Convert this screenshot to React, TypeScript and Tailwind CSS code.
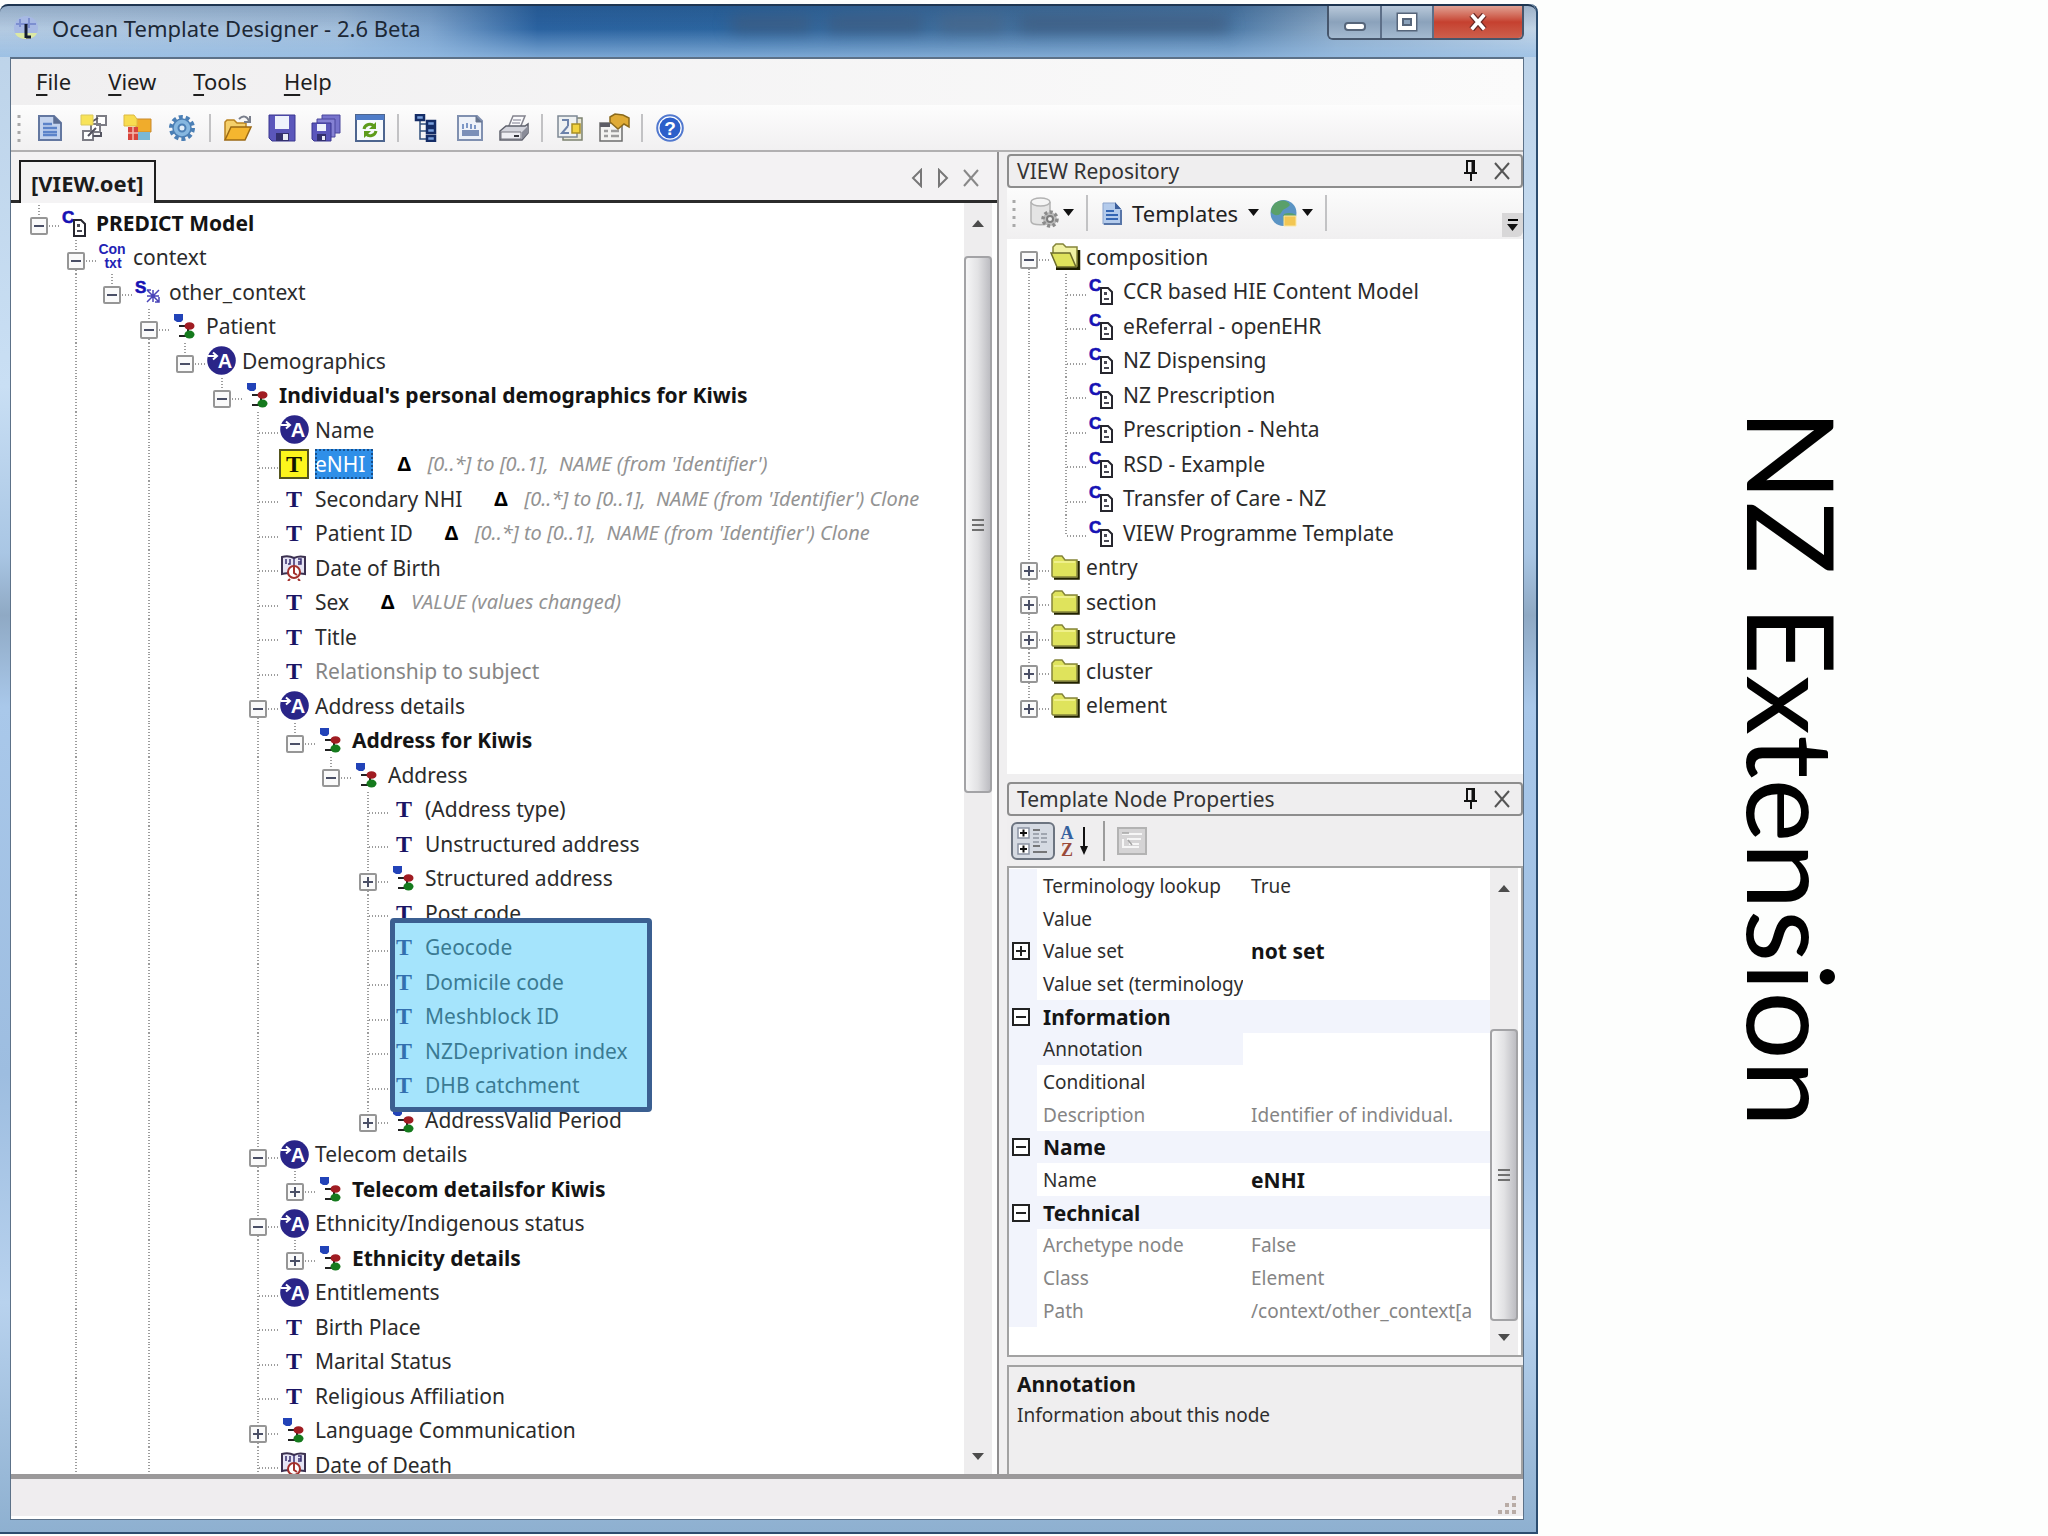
import React from 'react';
import clsx from 'clsx';

type IconName = 'composition' | 'context' | 'structure' | 'cluster' | 'slot' | 'text' | 'date' | 'folder' | 'folderOpen';

type TreeItem = {
  level: number;
  icon: IconName;
  label: string;
  state?: 'open' | 'closed';
  bold?: boolean;
  muted?: boolean;
  selected?: boolean;
  note?: string;
};

const templateTree: TreeItem[] = [
  { level: 0, icon: 'composition', label: 'PREDICT Model', state: 'open', bold: true },
  { level: 1, icon: 'context', label: 'context', state: 'open' },
  { level: 2, icon: 'structure', label: 'other_context', state: 'open' },
  { level: 3, icon: 'cluster', label: 'Patient', state: 'open' },
  { level: 4, icon: 'slot', label: 'Demographics', state: 'open' },
  { level: 5, icon: 'cluster', label: "Individual's personal demographics for Kiwis", state: 'open', bold: true },
  { level: 6, icon: 'slot', label: 'Name' },
  { level: 6, icon: 'text', label: 'eNHI', selected: true, note: "[0..*] to [0..1],  NAME (from 'Identifier')" },
  { level: 6, icon: 'text', label: 'Secondary NHI', note: "[0..*] to [0..1],  NAME (from 'Identifier') Clone" },
  { level: 6, icon: 'text', label: 'Patient ID', note: "[0..*] to [0..1],  NAME (from 'Identifier') Clone" },
  { level: 6, icon: 'date', label: 'Date of Birth' },
  { level: 6, icon: 'text', label: 'Sex', note: 'VALUE (values changed)' },
  { level: 6, icon: 'text', label: 'Title' },
  { level: 6, icon: 'text', label: 'Relationship to subject', muted: true },
  { level: 6, icon: 'slot', label: 'Address details', state: 'open' },
  { level: 7, icon: 'cluster', label: 'Address for Kiwis', state: 'open', bold: true },
  { level: 8, icon: 'cluster', label: 'Address', state: 'open' },
  { level: 9, icon: 'text', label: '(Address type)' },
  { level: 9, icon: 'text', label: 'Unstructured address' },
  { level: 9, icon: 'cluster', label: 'Structured address', state: 'closed' },
  { level: 9, icon: 'text', label: 'Post code' },
  { level: 9, icon: 'text', label: 'Geocode' },
  { level: 9, icon: 'text', label: 'Domicile code' },
  { level: 9, icon: 'text', label: 'Meshblock ID' },
  { level: 9, icon: 'text', label: 'NZDeprivation index' },
  { level: 9, icon: 'text', label: 'DHB catchment' },
  { level: 9, icon: 'cluster', label: 'AddressValid Period', state: 'closed' },
  { level: 6, icon: 'slot', label: 'Telecom details', state: 'open' },
  { level: 7, icon: 'cluster', label: 'Telecom detailsfor Kiwis', state: 'closed', bold: true },
  { level: 6, icon: 'slot', label: 'Ethnicity/Indigenous status', state: 'open' },
  { level: 7, icon: 'cluster', label: 'Ethnicity details', state: 'closed', bold: true },
  { level: 6, icon: 'slot', label: 'Entitlements' },
  { level: 6, icon: 'text', label: 'Birth Place' },
  { level: 6, icon: 'text', label: 'Marital Status' },
  { level: 6, icon: 'text', label: 'Religious Affiliation' },
  { level: 6, icon: 'cluster', label: 'Language Communication', state: 'closed' },
  { level: 6, icon: 'date', label: 'Date of Death' },
];

const repositoryTree: TreeItem[] = [
  { level: 0, icon: 'folderOpen', label: 'composition', state: 'open' },
  { level: 1, icon: 'composition', label: 'CCR based HIE Content Model' },
  { level: 1, icon: 'composition', label: 'eReferral - openEHR' },
  { level: 1, icon: 'composition', label: 'NZ Dispensing' },
  { level: 1, icon: 'composition', label: 'NZ Prescription' },
  { level: 1, icon: 'composition', label: 'Prescription - Nehta' },
  { level: 1, icon: 'composition', label: 'RSD - Example' },
  { level: 1, icon: 'composition', label: 'Transfer of Care - NZ' },
  { level: 1, icon: 'composition', label: 'VIEW Programme Template' },
  { level: 0, icon: 'folder', label: 'entry', state: 'closed' },
  { level: 0, icon: 'folder', label: 'section', state: 'closed' },
  { level: 0, icon: 'folder', label: 'structure', state: 'closed' },
  { level: 0, icon: 'folder', label: 'cluster', state: 'closed' },
  { level: 0, icon: 'folder', label: 'element', state: 'closed' },
];

type Property = {
  name: string;
  value?: string;
  group?: boolean;
  expander?: 'plus' | 'minus';
  muted?: boolean;
  strong?: boolean;
  active?: boolean;
};

const properties: Property[] = [
  { name: 'Terminology lookup', value: 'True' },
  { name: 'Value' },
  { name: 'Value set', value: 'not set', expander: 'plus', strong: true },
  { name: 'Value set (terminology' },
  { name: 'Information', group: true, expander: 'minus' },
  { name: 'Annotation', active: true },
  { name: 'Conditional' },
  { name: 'Description', value: 'Identifier of individual.', muted: true },
  { name: 'Name', group: true, expander: 'minus' },
  { name: 'Name', value: 'eNHI', strong: true },
  { name: 'Technical', group: true, expander: 'minus' },
  { name: 'Archetype node', value: 'False', muted: true },
  { name: 'Class', value: 'Element', muted: true },
  { name: 'Path', value: '/context/other_context[a', muted: true },
];

// does the line at this level carry on below row i?
const continues = (items: TreeItem[], i: number, level: number, tail: number[]) => {
  for (let j = i + 1; j < items.length; j++) {
    if (items[j].level === level) return true;
    if (items[j].level < level) return false;
  }
  return tail.includes(level);
};

const NodeIcon = ({ name, selected }: { name: IconName; selected?: boolean }) => {
  switch (name) {
    case 'text':
      return (
        <span
          className={clsx(
            "flex h-[30px] w-[30px] items-center justify-center font-['Liberation_Serif',serif] text-[24px] leading-none font-bold text-[#1a1464]",
            selected && 'border-2 border-[#55551e] bg-[#fdf51c] text-[#141400]',
          )}
        >
          T
        </span>
      );
    case 'slot':
      return (
        <svg width="29" height="29" viewBox="0 0 29 29">
          <circle cx="14.5" cy="14.5" r="14.3" fill="#2a2588" />
          <path d="M1 10h8M6 6.500l4 3.500-4 3.500" fill="none" stroke="#fff" strokeWidth="2" />
          <text x="18" y="22" textAnchor="middle" fontSize="20" fontWeight="700" fontFamily="Liberation Sans, sans-serif" fill="#fff">A</text>
        </svg>
      );
    case 'cluster':
      return (
        <svg width="22" height="26" viewBox="0 0 22 26">
          <path d="M0 1h9v6l-2 2H3L0 7z" fill="#2243b8" />
          <path d="M5 13h9M5 23h9M14 13v9" stroke="#222" strokeWidth="2" fill="none" />
          <ellipse cx="15.500" cy="13" rx="5" ry="3.800" fill="#a01c22" />
          <ellipse cx="15.500" cy="21.500" rx="5" ry="4" fill="#157a1d" />
        </svg>
      );
    case 'composition':
      return (
        <svg width="26" height="26" viewBox="0 0 26 26" className="overflow-visible">
          <text x="0" y="13" fontSize="17" fontWeight="700" fontFamily="Liberation Sans, sans-serif" fill="#1612b4" stroke="#1612b4" strokeWidth="0.600">C</text>
          <path d="M12 10h7l4 4v12H12z" fill="#fff" stroke="#26262e" strokeWidth="2" />
          <path d="M15 14h3v3h-3zM15 20h5v2h-5z" fill="#4a4a55" />
        </svg>
      );
    case 'context':
      return (
        <svg width="28" height="28" viewBox="0 0 28 28" className="overflow-visible">
          <text x="14" y="11" textAnchor="middle" fontSize="14" fontWeight="700" fontFamily="Liberation Sans, sans-serif" fill="#231fb5">Con</text>
          <text x="15" y="25" textAnchor="middle" fontSize="14" fontWeight="700" fontFamily="Liberation Sans, sans-serif" fill="#231fb5">txt</text>
        </svg>
      );
    case 'structure':
      return (
        <svg width="26" height="26" viewBox="0 0 26 26" className="overflow-visible">
          <text x="0" y="14" fontSize="17" fontWeight="700" fontFamily="Liberation Sans, sans-serif" fill="#1612b4" stroke="#1612b4" strokeWidth="0.600">S</text>
          <path d="M12 11l12 12M12 23l12-12M12 17h12M18 11v12M12 11h4M20 23h4v-5" fill="none" stroke="#4a44b8" strokeWidth="1.500" />
        </svg>
      );
    case 'date':
      return (
        <svg width="26" height="26" viewBox="0 0 26 26">
          <path d="M1 2c4-1 8-1 12 1 4-2 7-2 11-1v17c-4-1-7-1-11 1-4-2-8-2-12-1z" fill="#e6e4f4" stroke="#3b3050" strokeWidth="2" />
          <path d="M5 4v5M9 4v5h-2M13 3v8M17 4h3v5h-3M17 7h3" stroke="#3a2f70" strokeWidth="1.500" fill="none" />
          <circle cx="13" cy="17" r="6" fill="#fff" stroke="#a3302c" strokeWidth="2" />
          <path d="M13 11v7l3 2M9 24l-2 2M17 24l2 2" stroke="#a3302c" strokeWidth="2" fill="none" />
        </svg>
      );
    case 'folder':
      return (
        <svg width="29" height="26" viewBox="0 0 29 26">
          <path d="M3 24.500h24.500V7" fill="none" stroke="#222200" strokeWidth="2.500" />
          <path d="M1 22V5l3-3h7l3 4h12v17H2z" fill="#dfe35c" stroke="#85853a" strokeWidth="1.500" />
          <path d="M3 8h21" stroke="#f4f59a" strokeWidth="1.500" />
        </svg>
      );
    case 'folderOpen':
      return (
        <svg width="31" height="27" viewBox="0 0 31 27">
          <path d="M6 25.500h22.500V7" fill="none" stroke="#1c1c00" strokeWidth="3.500" />
          <path d="M3 10V4l3-3h7l3 3h11v19H7z" fill="#f1f2a4" stroke="#85853a" strokeWidth="1.500" />
          <path d="M1 10h19l6 14H7z" fill="#dfe35c" stroke="#6c6c2c" strokeWidth="1.500" />
        </svg>
      );
  }
};

const dots = { stroke: '#9c9c9c', strokeWidth: 2, strokeDasharray: '1 2' };

const Connector = ({ item, last, first }: { item: TreeItem; last: boolean; first: boolean }) => (
  <svg className="block h-[35px] w-full overflow-visible">
    <path d={`M18 ${first ? 21 : 0}V${last ? 21 : 35}`} {...dots} />
    <path d="M19 21h21" {...dots} />
    {item.state && (
      <>
        <rect x="10" y="13" width="16" height="16" rx="1" fill="#fafafa" stroke="#969696" strokeWidth="2" />
        <path d={item.state === 'open' ? 'M13 21h10' : 'M13 21h10M18 16v10'} stroke="#4a4f66" strokeWidth="2" />
      </>
    )}
  </svg>
);

const Tree = ({ items, label, tail = [], lead = false }: { items: TreeItem[]; label: string; tail?: number[]; lead?: boolean }) => (
  <ul aria-label={label} className="text-[21px] leading-[30px] whitespace-nowrap text-[#2b2b2b]">
    {items.map((item, i) => {
      const last = !continues(items, i, item.level, tail);
      return (
        <li key={i} className="flex items-center odd:h-[35px] even:h-[34px]">
          {Array.from({ length: item.level }, (_, level) => (
            <span key={level} className="shrink-0 self-start odd:w-[37px] even:w-9">
              {continues(items, i, level, tail) && (
                <svg className="block h-[35px] w-full">
                  <path d="M18 0V35" {...dots} />
                </svg>
              )}
            </span>
          ))}
          {item.state ? (
            <button
              type="button"
              aria-label={`${item.state === 'open' ? 'Collapse' : 'Expand'} ${item.label}`}
              className="w-9 shrink-0 self-start"
            >
              <Connector item={item} last={last} first={i === 0 && !lead} />
            </button>
          ) : (
            <span className="w-9 shrink-0 self-start">
              <Connector item={item} last={last} first={false} />
            </span>
          )}
          <span className="z-10 flex w-9 shrink-0 items-center justify-center">
            <NodeIcon name={item.icon} selected={item.selected} />
          </span>
          <span
            className={clsx(
              'ml-[3px] pr-2',
              item.bold && 'font-bold text-[#141414]',
              item.muted && 'text-[#858585]',
              item.selected && 'bg-[#2f8fe8] text-white outline-2 -outline-offset-2 outline-dotted outline-[#164f8c]',
            )}
          >
            {item.label}
          </span>
          {item.note && (
            <>
              <span className="ml-6 w-4 text-[20px] font-bold text-black">Δ</span>
              <span className="ml-[14px] text-[20px] whitespace-pre text-[#939393] italic">{item.note}</span>
            </>
          )}
        </li>
      );
    })}
  </ul>
);

const DocIcon = () => (
  <svg width="28" height="28" viewBox="0 0 28 28">
    <path d="M3 2h15l7 7v17H3z" fill="#c3d3ee" stroke="#6377a0" strokeWidth="2" />
    <path d="M18 2v7h7" fill="#5c6f94" stroke="#5c6f94" strokeWidth="1.500" />
    <path d="M7 10h9M7 14h14M7 18h14M7 21h14" stroke="#5b83c9" strokeWidth="2.500" />
  </svg>
);

const MergeIcon = () => (
  <svg width="28" height="28" viewBox="0 0 28 28">
    <path d="M17 2h9v9h-9zM11 10h9v8h-9zM3 17h10v9H3z" fill="#fff" stroke="#7c7c84" strokeWidth="2" />
    <path d="M8 10l10-6M8 22l8-8M13 22h8v-4" stroke="#545460" strokeWidth="2" fill="none" />
    <path d="M1 1h12v10H1z" fill="#f8e358" stroke="#d9c85e" />
  </svg>
);

const BlocksIcon = () => (
  <svg width="30" height="28" viewBox="0 0 30 28">
    <path d="M13 5h15v13H13z" fill="#f0ac2c" stroke="#c98a2a" />
    <path d="M1 1h10l3 4v7H1z" fill="#f8dc50" stroke="#dcb942" />
    <path d="M5 13h10v13H5z" fill="#d8443c" />
    <path d="M15 18h12v8H15z" fill="#7ab8d4" />
    <path d="M10 13v13M5 19h10" stroke="#f2b9b0" strokeWidth="1.500" />
  </svg>
);

const GearIcon = () => (
  <svg width="28" height="28" viewBox="0 0 28 28">
    <circle cx="14" cy="14" r="11" fill="none" stroke="#4b7fb5" strokeWidth="4" strokeDasharray="4 2.900" />
    <circle cx="14" cy="14" r="9" fill="#86b7e0" stroke="#4b7fb5" strokeWidth="1.500" />
    <circle cx="14" cy="14" r="3.500" fill="#e3eef8" stroke="#4b7fb5" strokeWidth="2" />
  </svg>
);

const OpenIcon = () => (
  <svg width="30" height="28" viewBox="0 0 30 28">
    <path d="M2 26V8l2-2h7l3 3h9v5" fill="#f5cf6a" stroke="#b98220" strokeWidth="1.500" />
    <path d="M2 26l6-13h20l-6 13z" fill="#f5b62f" stroke="#9c6a14" strokeWidth="1.500" />
    <path d="M16 5c4-4 8-3 10 2M27 2v6h-6" fill="none" stroke="#7a7f8c" strokeWidth="2" />
  </svg>
);

const SaveIcon = () => (
  <svg width="28" height="28" viewBox="0 0 28 28">
    <path d="M1 1h26v26H4l-3-3z" fill="#5b57bb" stroke="#3a3790" />
    <path d="M7 2h14v13H7z" fill="#eef2fb" />
    <path d="M8 19h13v8H8z" fill="#33306e" />
    <path d="M15 20h5v6h-5z" fill="#e8ebf6" />
  </svg>
);

const SaveAllIcon = () => (
  <svg width="30" height="28" viewBox="0 0 30 28">
    <path d="M11 1h18v18H11z" fill="#7773cc" stroke="#4a479c" />
    <path d="M6 5h18v18H6z" fill="#8581d4" stroke="#4a479c" />
    <path d="M1 9h19v18H3l-2-2z" fill="#5b57bb" stroke="#3a3790" />
    <path d="M6 10h9v7H6z" fill="#eef2fb" />
    <path d="M6 20h9v7H6z" fill="#33306e" />
    <path d="M11 22h3v4h-3z" fill="#e8ebf6" />
  </svg>
);

const RefreshIcon = () => (
  <svg width="30" height="28" viewBox="0 0 30 28">
    <path d="M1 1h28v26H1z" fill="#f7fafd" stroke="#4d658f" strokeWidth="2" />
    <path d="M1 1h28v5H1z" fill="#4f7cc8" />
    <path d="M9 15c1-5 7-6 10-3M21 17c-1 5-7 6-10 3" fill="none" stroke="#5d9c1c" strokeWidth="3" />
    <path d="M21 8v7h-7zM9 24v-7h7z" fill="#5d9c1c" />
  </svg>
);

const HierarchyIcon = () => (
  <svg width="24" height="28" viewBox="0 0 24 28">
    <path d="M6 6v19h7M6 10h7M6 17h7" fill="none" stroke="#32507c" strokeWidth="1.500" />
    <path d="M2 1h8v5H2zM13 7h8v5h-8zM13 14h8v5h-8zM13 22h8v5h-8z" fill="#7aa0dc" stroke="#142c66" strokeWidth="2.500" />
  </svg>
);

const CodeDocIcon = () => (
  <svg width="28" height="28" viewBox="0 0 28 28">
    <path d="M2 2h19l5 5v19H2z" fill="#eef2f9" stroke="#8090b0" strokeWidth="2" />
    <path d="M20 2v6h6" fill="#66758f" stroke="#66758f" />
    <path d="M7 10v5M11 9v5M15 10v5M19 11v4" stroke="#7d97c6" strokeWidth="2" />
    <path d="M6 16h17v6H6z" fill="#7c90b8" />
  </svg>
);

const PrintIcon = () => (
  <svg width="30" height="28" viewBox="0 0 30 28">
    <path d="M9 14l5-12h12l-5 12z" fill="#fbfbfd" stroke="#83838d" strokeWidth="1.500" />
    <path d="M14 6h8M13 9h8" stroke="#a7a7b2" strokeWidth="1.500" />
    <path d="M1 17l6-5h19l3-2v9l-6 7H1z" fill="#d3d4dc" stroke="#5e606b" strokeWidth="1.500" />
    <path d="M2 18h20v7H2z" fill="#eeeef3" stroke="#74757f" />
    <path d="M23 18l6-6v7l-6 6z" fill="#8a8c98" />
    <path d="M15 22h5" stroke="#35353c" strokeWidth="2" />
  </svg>
);

const CompareIcon = () => (
  <svg width="28" height="28" viewBox="0 0 28 28">
    <path d="M7 4h19v22H7z" fill="#e8e7d6" stroke="#7c8270" strokeWidth="1.500" />
    <path d="M2 2h19v21H2z" fill="#eef1f2" stroke="#7e8894" strokeWidth="1.500" />
    <path d="M6 6h6v6M12 12l-6 7h7" stroke="#6d83aa" strokeWidth="2" fill="none" />
    <path d="M16 10h8v9h-8z" fill="#f1d23f" stroke="#a88e25" strokeWidth="1.500" />
  </svg>
);

const FormIcon = () => (
  <svg width="32" height="30" viewBox="0 0 32 30">
    <path d="M2 10h22v18H2z" fill="#f3f3f1" stroke="#6d6d6d" strokeWidth="1.500" />
    <path d="M2 10h10v4H2z" fill="#5c5c64" />
    <path d="M6 18h4M6 23h4M13 18h8M13 23h8" stroke="#9c9c9c" strokeWidth="2.500" />
    <path d="M12 4l5-3 8 1 6 3v9l-5-3-6 5-8-7z" fill="#e0ab35" stroke="#8b6a1c" strokeWidth="1.500" />
  </svg>
);

const HelpIcon = () => (
  <svg width="28" height="28" viewBox="0 0 28 28">
    <circle cx="14" cy="14" r="12.800" fill="#fff" stroke="#5279cf" strokeWidth="2" />
    <circle cx="14" cy="14" r="10.500" fill="#2c5fca" />
    <text x="14" y="21" textAnchor="middle" fontSize="19" fontWeight="700" fontFamily="Liberation Sans, sans-serif" fill="#fff">?</text>
  </svg>
);

const toolGroups = [
  [
    { label: 'New template', Icon: DocIcon },
    { label: 'Merge', Icon: MergeIcon },
    { label: 'Archetypes', Icon: BlocksIcon },
    { label: 'Settings', Icon: GearIcon },
  ],
  [
    { label: 'Open', Icon: OpenIcon },
    { label: 'Save', Icon: SaveIcon },
    { label: 'Save all', Icon: SaveAllIcon },
    { label: 'Refresh', Icon: RefreshIcon },
  ],
  [
    { label: 'Hierarchy', Icon: HierarchyIcon },
    { label: 'Export', Icon: CodeDocIcon },
    { label: 'Print', Icon: PrintIcon },
  ],
  [
    { label: 'Compare', Icon: CompareIcon },
    { label: 'Form', Icon: FormIcon },
  ],
  [{ label: 'Help', Icon: HelpIcon }],
];

const Grip = () => (
  <svg width="6" height="30" viewBox="0 0 6 30" className="shrink-0">
    <path d="M3 2v28" stroke="#a9a9a9" strokeWidth="3" strokeDasharray="3 5" />
  </svg>
);

const Caret = () => (
  <svg width="11" height="7" viewBox="0 0 11 7" className="shrink-0">
    <path d="M0 0h11L5.500 7z" fill="#111" />
  </svg>
);

const CloseGlyph = ({ color }: { color: string }) => (
  <svg width="16" height="18" viewBox="0 0 16 18">
    <path d="M1 1l14 16M15 1L1 17" stroke={color} strokeWidth="2" />
  </svg>
);

const PanelHeader = ({ title }: { title: string }) => (
  <header className="flex h-[34px] shrink-0 items-center rounded-sm border-2 border-[#8d8d8d] bg-[#efeeef] pr-[11px] pl-2 text-[21px] leading-[30px] text-[#333]">
    <h2 className="flex-1">{title}</h2>
    <button type="button" aria-label={`Pin ${title}`} className="w-[31px]">
      <svg width="16" height="22" viewBox="0 0 16 22">
        <path d="M4 1h7v12H4zM1 13h13M8 13v8" fill="none" stroke="#111" strokeWidth="2" />
        <path d="M10 1v12" stroke="#111" strokeWidth="3" />
      </svg>
    </button>
    <button type="button" aria-label={`Close ${title}`}>
      <CloseGlyph color="#555" />
    </button>
  </header>
);

const Scrollbar = ({ thumb }: { thumb: string }) => (
  <div className="flex w-7 shrink-0 flex-col items-center bg-[#eeedee]">
    <svg width="12" height="7" viewBox="0 0 12 7" className="mt-[17px] mb-4 shrink-0">
      <path d="M0 7h12L6 0z" fill="#4c4c4c" />
    </svg>
    <div className={clsx('flex w-full flex-col items-center justify-center gap-[3px] rounded-sm border-2 border-[#a3a3a6] bg-linear-to-r from-[#f6f6f7] via-[#e2e2e4] to-[#bdbdc2]', thumb)}>
      <span className="h-0.5 w-3 bg-[#707070]" />
      <span className="h-0.5 w-3 bg-[#707070]" />
      <span className="h-0.5 w-3 bg-[#707070]" />
    </div>
    <svg width="12" height="7" viewBox="0 0 12 7" className="mt-auto mb-[14px] shrink-0">
      <path d="M0 0h12L6 7z" fill="#4c4c4c" />
    </svg>
  </div>
);

const TitleBar = () => (
  <header className="flex h-[53px] shrink-0 items-start rounded-t-lg border-t-2 border-[#1e3550] bg-[linear-gradient(to_bottom,rgba(20,50,90,0.2),transparent_45%,rgba(150,190,230,0.75)),linear-gradient(to_right,#b4cae1,#a2bedb_22%,#7ea4cd_28%,#2a62a0_35%,#2c659f_48%,#41709f_65%,#4b78a5_80%,#8eabc8_87%,#c2d4e6)] pr-3 pl-3">
    <svg width="28" height="28" viewBox="0 0 28 28" className="mt-2">
      <circle cx="14" cy="14" r="12" fill="#a7b9e4" />
      <path d="M3 19h22c-3 8-19 8-22 0z" fill="#dbe8a4" />
      <path d="M4 10h20M8 5v8M17 4v10" stroke="#7c8fd0" strokeWidth="2" />
      <path d="M14 10v14M14 23h5" stroke="#141c30" strokeWidth="3" />
    </svg>
    <h1 className="mt-2 ml-3 text-[22px] leading-[28px] text-[#1c2836]">Ocean Template Designer - 2.6 Beta</h1>
    <div className="mt-3 ml-auto flex gap-4 pr-[100px] blur-sm">
      <span className="h-3 w-20 bg-[#3f5a7c]" />
      <span className="h-3 w-24 bg-[#3f5a7c]" />
      <span className="h-3 w-16 bg-[#4a6585]" />
      <span className="h-3 w-52 bg-[#3f5a7c]" />
    </div>
    <div className="flex h-[34px] overflow-hidden rounded-b-md border-2 border-t-0 border-[#46566c]">
      <button type="button" aria-label="Minimize" className="flex w-[53px] items-center justify-center border-r-2 border-[#5d6f88] bg-linear-to-b from-[#b9c9da] via-[#8ba2bb] to-[#a4bad0]">
        <span className="mt-2 h-[9px] w-[22px] rounded-sm border-2 border-[#56657a] bg-white" />
      </button>
      <button type="button" aria-label="Maximize" className="flex w-[52px] items-center justify-center border-r-2 border-[#5d6f88] bg-linear-to-b from-[#b9c9da] via-[#8ba2bb] to-[#a4bad0]">
        <svg width="24" height="20" viewBox="0 0 24 20">
          <path d="M5 4h14v12H5z" fill="none" stroke="#56657a" strokeWidth="7" />
          <path d="M5 4h14v12H5z" fill="#8ba2bb" stroke="#fff" strokeWidth="4" />
          <path d="M8 7h8v6H8z" fill="#8ba2bb" stroke="#56657a" strokeWidth="2" />
        </svg>
      </button>
      <button type="button" aria-label="Close" className="flex w-[88px] items-center justify-center bg-linear-to-b from-[#dfa093] via-[#c5402f] to-[#cd5f4c]">
        <svg width="22" height="18" viewBox="0 0 22 20">
          <path d="M4 2l14 16M18 2L4 18" stroke="#6b2a26" strokeWidth="7" />
          <path d="M4 2l14 16M18 2L4 18" stroke="#fff" strokeWidth="4" />
        </svg>
      </button>
    </div>
  </header>
);

const MenuBar = () => (
  <nav className="flex h-[46px] shrink-0 items-center gap-[37px] bg-linear-to-r from-[#f0eff0] to-[#fbfbfb] pb-[3px] pl-[25px] text-[22px] leading-[30px] text-[#1e1e1e]">
    {['File', 'View', 'Tools', 'Help'].map((name) => (
      <button key={name} type="button">
        <span className="underline underline-offset-4">{name[0]}</span>
        {name.slice(1)}
      </button>
    ))}
  </nav>
);

const ToolBar = () => (
  <div className="flex h-[47px] shrink-0 items-center border-b-2 border-[#b1b0b1] bg-linear-to-b from-[#fdfdfd] to-[#f1f0f1] pl-[5px]">
    <Grip />
    <div className="ml-[6px] flex items-center">
      {toolGroups.map((group, i) => (
        <React.Fragment key={i}>
          {i > 0 && <span className="mx-[5px] h-7 w-0.5 bg-[#c2c2c4]" />}
          {group.map(({ label, Icon }) => (
            <button key={label} type="button" aria-label={label} className="flex w-11 justify-center">
              <Icon />
            </button>
          ))}
        </React.Fragment>
      ))}
    </div>
  </div>
);

const TemplatePanel = () => (
  <section className="flex min-w-0 flex-1 flex-col border-r-2 border-[#8f8e8f] bg-white">
    <div className="flex h-[51px] shrink-0 items-end bg-[#f3f2f3]">
      <span className="h-[3px] w-2 bg-[#2b2b2b]" />
      <button type="button" className="h-[43px] border-2 border-b-0 border-[#1e1e1e] bg-[#f4f3f4] px-[10px] text-[22px] leading-[30px] font-bold text-[#1c1c1c]">
        [VIEW.oet]
      </button>
      <div className="flex flex-1 items-center justify-end gap-[14px] self-stretch border-b-[3px] border-[#2b2b2b] pt-1 pr-[18px]">
        <button type="button" aria-label="Previous tab">
          <svg width="12" height="20" viewBox="0 0 12 20">
            <path d="M10 2v16L2 10z" fill="none" stroke="#777" strokeWidth="2" />
          </svg>
        </button>
        <button type="button" aria-label="Next tab">
          <svg width="12" height="20" viewBox="0 0 12 20">
            <path d="M2 2v16l8-8z" fill="none" stroke="#777" strokeWidth="2" />
          </svg>
        </button>
        <button type="button" aria-label="Close tab">
          <CloseGlyph color="#888" />
        </button>
      </div>
    </div>
    <div className="flex min-h-0 flex-1 pr-[5px]">
      <div className="relative min-w-0 flex-1 overflow-hidden pt-0.5 pl-[10px]">
        <Tree items={templateTree} label="Template" tail={[1, 3, 6]} lead />
        {/* highlighted local additions */}
        <div className="absolute top-[715px] left-[379px] z-20 h-[194px] w-[262px] rounded-sm border-[5px] border-[#3b5f91] bg-[#4bc9f9]/50" />
      </div>
      <Scrollbar thumb="mt-[13px] h-[537px]" />
    </div>
  </section>
);

const RepositoryPanel = () => (
  <section className="flex min-h-0 flex-1 flex-col">
    <PanelHeader title="VIEW Repository" />
    <div className="flex h-[51px] shrink-0 items-center bg-linear-to-b from-[#fcfcfc] to-[#f0eff0] pb-[2px] pl-1 text-[#222]">
      <Grip />
      <button type="button" aria-label="Repository" className="ml-3 flex items-center gap-1">
        <svg width="30" height="32" viewBox="0 0 30 32">
          <path d="M2 5v19c0 5 19 5 19 0V5" fill="#e4e4e4" stroke="#b2b2b2" strokeWidth="1.500" />
          <ellipse cx="11.500" cy="5" rx="9.500" ry="4" fill="#f5f5f5" stroke="#b2b2b2" strokeWidth="1.500" />
          <circle cx="21" cy="22" r="7" fill="#bcbcbc" stroke="#8b8b8b" strokeWidth="3.500" strokeDasharray="3 2.400" />
          <circle cx="21" cy="22" r="3" fill="#eee" stroke="#7c7c7c" strokeWidth="2" />
        </svg>
        <Caret />
      </button>
      <span className="ml-[12px] h-9 w-0.5 bg-[#c2c2c4]" />
      <button type="button" className="ml-[14px] flex items-center">
        <svg width="20" height="24" viewBox="0 0 20 24">
          <path d="M1 2h12l6 6v15H1z" fill="#b4cbec" stroke="#8ba3cc" />
          <path d="M13 1v7h6" fill="#3c5f9c" />
          <path d="M4 10h8M4 14h12M4 18h12" stroke="#3566b4" strokeWidth="2" />
          <path d="M2 23h17V9" stroke="#5775a8" strokeWidth="2" fill="none" />
        </svg>
        <span className="ml-[10px] mr-[10px] text-[22px] leading-[30px]">Templates</span>
        <Caret />
      </button>
      <button type="button" aria-label="Web" className="ml-[11px] flex items-center gap-1">
        <svg width="28" height="28" viewBox="0 0 28 28">
          <circle cx="13.500" cy="14" r="13" fill="#5b94c4" />
          <path d="M5 4c6-4 13-3 15 2-3 4-7 3-9 8-3 4-8 2-10-1 0-3 1-6 4-9zM14 15c5-2 9-1 12 1-1 5-4 8-9 10-4-3-5-7-3-11z" fill="#5aa06a" />
          <path d="M14 17h12v10H14z" fill="#f2c653" stroke="#fbe7a8" />
        </svg>
        <Caret />
      </button>
      <span className="ml-[12px] h-9 w-0.5 bg-[#c2c2c4]" />
      <button type="button" aria-label="More" className="ml-auto flex h-6 w-[21px] flex-col items-center justify-center gap-[3px] self-end rounded-br-md bg-[#d8d7d8]">
        <span className="h-0.5 w-[10px] bg-black" />
        <Caret />
      </button>
    </div>
    <div className="min-h-0 flex-1 overflow-hidden bg-white pl-1">
      <Tree items={repositoryTree} label="Repository" />
    </div>
  </section>
);

const PropertiesPanel = () => (
  <section className="mt-2 flex shrink-0 flex-col text-[19px] leading-6 text-[#2e2e2e]">
    <PanelHeader title="Template Node Properties" />
    <div className="flex h-[50px] items-center bg-[#efeeef] pl-1">
      <button type="button" aria-label="Categorized" className="flex h-[38px] w-11 items-center justify-center rounded-md border-2 border-[#6c7480] bg-[#d5dae2]">
        <svg width="34" height="30" viewBox="0 0 34 30">
          <path d="M2 2h11v10H2zM2 18h11v10H2z" fill="#fff" stroke="#8a93a3" strokeWidth="1.500" />
          <path d="M4 7h7M7.500 3.500v7M4 23h7M7.500 19.500v7" stroke="#111" strokeWidth="2" />
          <path d="M17 4h7M17 20h7M17 26h14" stroke="#555" strokeWidth="1.500" />
          <path d="M17 8h14M17 12h14M17 16h14" stroke="#8f95a0" strokeWidth="1.500" strokeDasharray="6 2" />
        </svg>
      </button>
      <button type="button" aria-label="Alphabetical" className="ml-1 flex w-9 items-center">
        <svg width="34" height="34" viewBox="0 0 34 34" className="overflow-visible">
          <text x="8" y="15" textAnchor="middle" fontSize="18" fontWeight="700" fontFamily="Liberation Serif, serif" fill="#35619e">A</text>
          <text x="8" y="32" textAnchor="middle" fontSize="18" fontWeight="700" fontFamily="Liberation Serif, serif" fill="#9a4a3a">Z</text>
          <path d="M25 3v24" stroke="#111" strokeWidth="2" />
          <path d="M21 22h8l-4 9z" fill="#111" />
        </svg>
      </button>
      <span className="mx-2 h-10 w-0.5 bg-[#9c9c9c]" />
      <button type="button" aria-label="Property pages" disabled>
        <svg width="38" height="30" viewBox="0 0 38 30">
          <path d="M5 2h28v26H5z" fill="#d5d4d5" stroke="#b3b3b3" strokeWidth="2" />
          <path d="M9 8h20M14 13h14M10 13v8h16M16 18h10" stroke="#f6f6f6" strokeWidth="2" fill="none" />
          <path d="M9 7h7M15 14l4 5" stroke="#a5a5a5" strokeWidth="1.500" />
        </svg>
      </button>
    </div>
    <div className="flex border-2 border-[#a2a2a2] bg-white">
      <div className="min-w-0 flex-1 overflow-hidden pt-px pb-7">
        <table className="w-full table-fixed border-collapse">
          <tbody>
            {properties.map((p, i) => (
              <tr key={i} className={clsx('h-[33px] nth-[3n]:h-8', p.group && 'bg-[#f2f4fc]')}>
                <td className="w-7 bg-[#f2f4fc] p-0">
                  {p.expander && (
                    <button type="button" aria-label={`Toggle ${p.name}`} className="ml-[3px] block">
                      <svg width="18" height="18" viewBox="0 0 18 18">
                        <path d="M1 1h16v16H1z" fill="#fff" stroke="#222" strokeWidth="2" />
                        <path d={p.expander === 'plus' ? 'M4 9h10M9 4v10' : 'M4 9h10'} stroke="#222" strokeWidth="2" />
                      </svg>
                    </button>
                  )}
                </td>
                <th
                  scope="row"
                  colSpan={p.group ? 2 : 1}
                  className={clsx(
                    'w-[206px] overflow-hidden p-0 pl-[6px] text-left whitespace-nowrap',
                    p.group ? 'text-[21px] font-bold text-[#151515]' : 'font-normal',
                    p.muted && 'text-[#858585]',
                    p.active && 'bg-[#f2f4fc]',
                  )}
                >
                  {p.name}
                </th>
                {!p.group && (
                  <td className={clsx('overflow-hidden p-0 pl-2 whitespace-nowrap', p.muted && 'text-[#858585]', p.strong && 'text-[21px] font-bold text-[#151515]')}>
                    {p.value}
                  </td>
                )}
              </tr>
            ))}
          </tbody>
        </table>
      </div>
      <div className="flex pr-[3px]">
        <Scrollbar thumb="mt-[121px] h-[292px]" />
      </div>
    </div>
    <div className="mt-2 h-[109px] border-2 border-b-0 border-[#a2a2a2] bg-[#efeeef] px-2 pt-[5px]">
      <p className="text-[21px] font-bold text-[#151515]">Annotation</p>
      <p className="mt-[7px]">Information about this node</p>
    </div>
  </section>
);

const StatusBar = () => (
  <footer className="flex h-10 shrink-0 items-end justify-end border-b-[3px] border-white bg-[#efedef] pr-[5px]">
    <svg width="22" height="22" viewBox="0 0 22 22">
      <path d="M16 2h4v4h-4zM9 9h4v4H9zM16 9h4v4h-4zM2 16h4v4H2zM9 16h4v4H9zM16 16h4v4h-4z" fill="#b9aca6" />
    </svg>
  </footer>
);

export default function App() {
  return (
    <main className="flex h-screen bg-[#fdfefd] font-['Noto_Sans','Open_Sans',sans-serif]">
      <div className="flex w-[75.1%] flex-col pt-1 pb-0.5">
        <div className="flex min-h-0 flex-1 flex-col rounded-t-lg border-r-2 border-b-2 border-[#2c4d70] bg-[linear-gradient(to_bottom,#bcd2e8,#c9dff4_25%,#a9c6e4_36%,#8fa9c4_40%,#a9c8ea_46%,#9dbde0_70%,#b8d2ee_85%,#8eb0d0)]">
          <TitleBar />
          <div className="flex min-h-0 flex-1 flex-col pr-3 pb-3 pl-[10px]">
            <div className="flex min-h-0 flex-1 flex-col border border-t-2 border-[#5c7188] bg-[#f0eff0]">
              <MenuBar />
              <ToolBar />
              <div className="flex min-h-0 flex-1 border-b-[5px] border-[#9b999a]">
                <TemplatePanel />
                <div className="ml-2 flex w-[516px] shrink-0 flex-col pt-0.5">
                  <RepositoryPanel />
                  <PropertiesPanel />
                </div>
              </div>
              <StatusBar />
            </div>
          </div>
        </div>
      </div>
      <aside className="flex flex-1 items-center justify-center">
        <p className="font-[family-name:Lato,sans-serif] text-[121px] leading-none text-black [writing-mode:vertical-rl]">NZ Extension</p>
      </aside>
    </main>
  );
}
